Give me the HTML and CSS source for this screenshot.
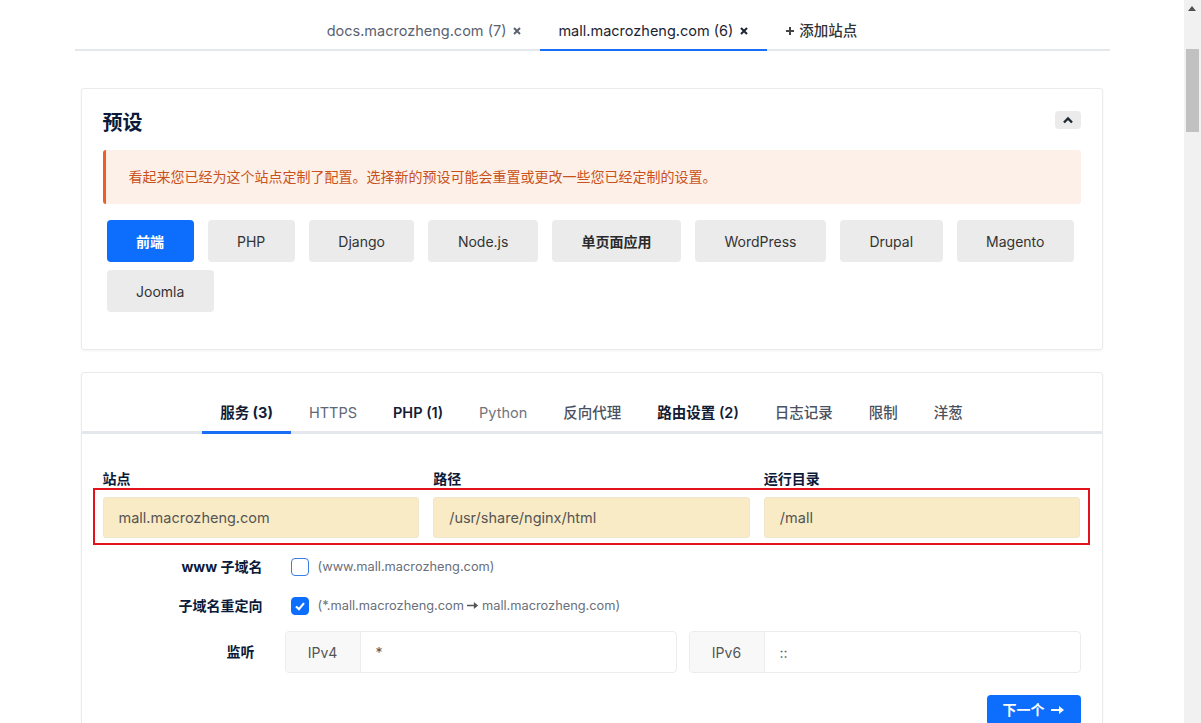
FILE: index.html
```html
<!DOCTYPE html>
<html lang="zh">
<head>
<meta charset="utf-8">
<title>NGINXConfig</title>
<link rel="stylesheet" href="styles.css">
</head>
<body>
<div class="page">
  <div class="container">
    <nav class="site-tabs">
      <div class="site-tab">docs.macrozheng.com (7)
        <svg class="x" viewBox="0 0 10 10"><path d="M2 2L8 8M8 2L2 8"/></svg>
      </div>
      <div class="site-tab active">mall.macrozheng.com (6)
        <svg class="x" viewBox="0 0 10 10"><path d="M2 2L8 8M8 2L2 8"/></svg>
      </div>
      <div class="site-tab add">
        <svg class="plus" viewBox="0 0 10 10"><path d="M5 1V9M1 5H9"/></svg>添加站点
      </div>
    </nav>

    <section class="card presets">
      <div class="card-head">
        <h2>预设</h2>
        <button class="collapse">
          <svg viewBox="0 0 12 8"><path d="M2 6.5L6 2.5L10 6.5"/></svg>
        </button>
      </div>
      <div class="alert">看起来您已经为这个站点定制了配置。选择新的预设可能会重置或更改一些您已经定制的设置。</div>
      <div class="preset-list">
        <button class="preset active">前端</button>
        <button class="preset">PHP</button>
        <button class="preset">Django</button>
        <button class="preset">Node.js</button>
        <button class="preset cjk">单页面应用</button>
        <button class="preset">WordPress</button>
        <button class="preset">Drupal</button>
        <button class="preset">Magento</button>
        <button class="preset">Joomla</button>
      </div>
    </section>

    <section class="card config">
      <nav class="cfg-tabs">
        <div class="cfg-tab active">服务 (3)</div>
        <div class="cfg-tab muted">HTTPS</div>
        <div class="cfg-tab strong">PHP (1)</div>
        <div class="cfg-tab faint">Python</div>
        <div class="cfg-tab">反向代理</div>
        <div class="cfg-tab strong">路由设置 (2)</div>
        <div class="cfg-tab">日志记录</div>
        <div class="cfg-tab">限制</div>
        <div class="cfg-tab">洋葱</div>
      </nav>

      <div class="fields">
        <div class="field">
          <label>站点</label>
          <div class="input hl">mall.macrozheng.com</div>
        </div>
        <div class="field">
          <label>路径</label>
          <div class="input hl">/usr/share/nginx/html</div>
        </div>
        <div class="field">
          <label>运行目录</label>
          <div class="input hl">/mall</div>
        </div>
        <div class="annot"></div>
      </div>

      <div class="row check-row first">
        <div class="row-label">www 子域名</div>
        <div class="row-body">
          <span class="checkbox"></span>
          <span class="hint">(www.mall.macrozheng.com)</span>
        </div>
      </div>
      <div class="row check-row">
        <div class="row-label">子域名重定向</div>
        <div class="row-body">
          <span class="checkbox checked"><svg viewBox="0 0 18 18"><path d="M4.5 9.5L7.8 12.5L13.5 5.8"/></svg></span>
          <span class="hint">(*.mall.macrozheng.com <svg class="arr-s" viewBox="0 0 14 10"><path d="M0 4H8V1L13 5L8 9V6H0Z"/></svg> mall.macrozheng.com)</span>
        </div>
      </div>
      <div class="row listen-row">
        <div class="row-label">监听</div>
        <div class="row-body groups">
          <div class="group">
            <span class="prefix">IPv4</span>
            <span class="gval">*</span>
          </div>
          <div class="group">
            <span class="prefix">IPv6</span>
            <span class="gval">::</span>
          </div>
        </div>
      </div>
      <div class="actions">
        <button class="next">下一个 <svg class="arr" viewBox="0 0 14 10"><path d="M0 4H8V1L13 5L8 9V6H0Z"/></svg></button>
      </div>
    </section>
  </div>
</div>

<div class="scrollbar">
  <span class="sb-up"></span>
  <span class="sb-thumb"></span>
</div>
</body>
</html>
```

FILE: styles.css
```css
html, body {
  margin: 0;
  padding: 0;
  overflow: hidden;
  background: #fff;
}
body {
  font-family: Inter, "Noto Sans CJK SC", sans-serif;
  font-size: 14px;
  color: #333;
}
.page {
  width: 1184px;
  height: 723px;
  overflow: hidden;
}
.container {
  width: 1035px;
  margin: 0 auto;
  padding-top: 10px;
}

/* site tabs */
.site-tabs {
  display: flex;
  justify-content: center;
  border-bottom: 2px solid #e4e7eb;
}
.site-tab {
  display: flex;
  align-items: center;
  gap: 6px;
  padding: 11px 18px 8px;
  line-height: 20px;
  font-size: 14.5px;
  color: #5a6270;
  margin-bottom: -2px;
  border-bottom: 2px solid transparent;
}
.site-tab.active {
  color: #1d2433;
  border-bottom-color: #1a6ef5;
}
.site-tab .x {
  width: 10px;
  height: 10px;
  stroke: currentColor;
  stroke-width: 2;
  fill: none;
}
.site-tab.add {
  color: #333;
  gap: 4px;
  font-weight: 500;
}
.site-tab .plus {
  width: 10px;
  height: 10px;
  stroke: #444;
  stroke-width: 2;
  fill: none;
}

/* cards */
.card {
  margin: 0 7px 0 6px;
  border: 1px solid #ebebeb;
  border-radius: 3px;
  box-shadow: 0 1px 3px rgba(0,0,0,0.05);
  background: #fff;
}
.presets {
  margin-top: 37px;
  padding: 20px 21px 37px;
}
.card-head {
  display: flex;
  align-items: flex-start;
  justify-content: space-between;
}
.card-head h2 {
  margin: 0;
  font-size: 20px;
  line-height: 28px;
  font-weight: 700;
  color: #0c1a3a;
}
.collapse {
  margin-top: 2px;
  width: 26px;
  height: 18px;
  border: 0;
  border-radius: 4px;
  background: #ebebeb;
  display: flex;
  align-items: center;
  justify-content: center;
  padding: 0;
}
.collapse svg {
  width: 12px;
  height: 8px;
  stroke: #1f2630;
  stroke-width: 2.4;
  fill: none;
}
.alert {
  margin-top: 13px;
  background: #fdf0e8;
  border-left: 3px solid #ec5f2a;
  border-radius: 3px;
  padding: 17px 23px;
  line-height: 20px;
  color: #c9521c;
  font-size: 14px;
}
.preset-list {
  margin-top: 16px;
  padding-left: 4px;
  display: flex;
  flex-wrap: wrap;
  gap: 8px 14px;
}
.preset {
  height: 42px;
  padding: 0 29.5px;
  border: 0;
  border-radius: 4px;
  background: #ebebeb;
  font-family: inherit;
  font-size: 14px;
  color: #333;
}
.preset.cjk {
  font-weight: 600;
  color: #2a2a2a;
}
.preset.active {
  background: #0d6efd;
  color: #fff;
  font-weight: 700;
}

/* config card */
.config {
  margin-top: 22px;
  padding: 0 21px 30px;
  height: 420px;
}
.cfg-tabs {
  display: flex;
  justify-content: center;
  margin: 20px -21px 0;
  border-bottom: 3px solid #e4e7eb;
}
.cfg-tab {
  padding: 10px 18px 8px;
  line-height: 20px;
  font-size: 14.5px;
  font-weight: 500;
  color: #4a5160;
  margin-bottom: -3px;
  border-bottom: 3px solid transparent;
}
.cfg-tab.active {
  color: #131c33;
  font-weight: 700;
  border-bottom-color: #1a6ef5;
}
.cfg-tab.strong {
  color: #131c33;
  font-weight: 600;
}
.cfg-tab.muted {
  color: #5f6674;
  font-weight: 400;
}
.cfg-tab.faint {
  color: #6f7480;
  font-weight: 400;
}

.fields {
  position: relative;
  margin-top: 35px;
  display: grid;
  grid-template-columns: 1fr 1fr 1fr;
  gap: 14px;
}
.field label {
  display: block;
  font-weight: 700;
  line-height: 20px;
  color: #0c1a3a;
  margin-bottom: 8px;
}
.input {
  height: 41px;
  box-sizing: border-box;
  border: 1px solid #efe6cc;
  border-radius: 3px;
  padding: 0 15px;
  display: flex;
  align-items: center;
  color: #555;
  font-size: 14.5px;
}
.input.hl {
  background: #f9ebc5;
}
.annot {
  position: absolute;
  left: -10px;
  right: -9px;
  top: 19px;
  bottom: -7px;
  border: 2px solid #e3131c;
  pointer-events: none;
}

.row {
  display: flex;
  align-items: center;
}
.row-label {
  width: 160px;
  text-align: right;
  font-weight: 700;
  color: #0c1a3a;
  line-height: 20px;
}
.check-row {
  height: 39px;
}
.check-row.first {
  margin-top: 9px;
}
.check-row .row-body {
  display: flex;
  align-items: center;
  gap: 9px;
  margin-left: 28px;
}
.checkbox {
  width: 18px;
  height: 18px;
  box-sizing: border-box;
  border: 1.5px solid #3a7ee8;
  border-radius: 4px;
  display: flex;
  align-items: center;
  justify-content: center;
  background: #fff;
}
.checkbox.checked {
  background: #0d6efd;
  border-color: #0d6efd;
}
.checkbox svg {
  width: 18px;
  height: 18px;
  stroke: #fff;
  stroke-width: 2.4;
  fill: none;
}
.hint {
  font-size: 12.8px;
  color: #6a6f7a;
  display: flex;
  align-items: center;
  gap: 3px;
}
.arr-s {
  width: 12px;
  height: 9px;
  fill: #555;
}
.listen-row {
  margin-top: 6px;
}
.listen-row .row-label {
  width: 152px;
}
.groups {
  margin-left: 30px;
  flex: 1;
  display: flex;
  gap: 12px;
}
.group {
  flex: 1;
  display: flex;
  height: 42px;
  box-sizing: border-box;
  border: 1px solid #ececec;
  border-radius: 4px;
  overflow: hidden;
}
.prefix {
  width: 74px;
  background: #f8f8f8;
  border-right: 1px solid #ececec;
  display: flex;
  align-items: center;
  justify-content: center;
  color: #555;
}
.gval {
  padding-left: 15px;
  display: flex;
  align-items: center;
  color: #555;
}
.actions {
  margin-top: 22px;
  display: flex;
  justify-content: flex-end;
}
.next {
  background: #0d6efd;
  color: #fff;
  border: 0;
  border-radius: 4px;
  font-family: inherit;
  font-size: 14px;
  font-weight: 700;
  padding: 5px 16px;
  line-height: 20px;
  display: flex;
  align-items: center;
  gap: 6px;
}
.next .arr {
  width: 14px;
  height: 10px;
  fill: #fff;
}

/* fake scrollbar */
.scrollbar {
  position: fixed;
  top: 0;
  right: 0;
  width: 17px;
  height: 100%;
  background: #f1f1f1;
}
.sb-up {
  position: absolute;
  top: 6px;
  left: 4px;
  width: 0;
  height: 0;
  border-left: 4.5px solid transparent;
  border-right: 4.5px solid transparent;
  border-bottom: 5px solid #505050;
}
.sb-thumb {
  position: absolute;
  top: 49px;
  left: 2px;
  width: 13px;
  height: 83px;
  background: #c1c1c1;
}
```
